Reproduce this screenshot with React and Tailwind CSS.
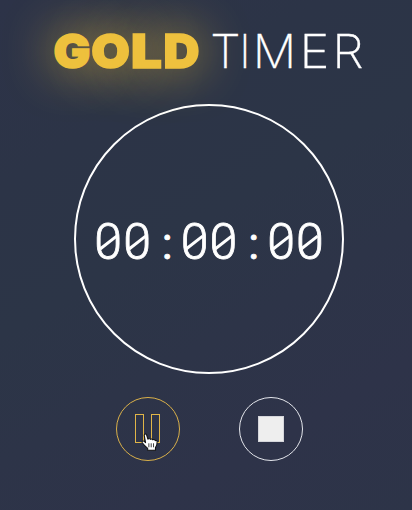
const title = [
  { ch: 'G', w: 'w-[36px]', scale: 'scale-x-[1.04]' },
  { ch: 'O', w: 'w-[41px]', scale: 'scale-x-[1.06]' },
  { ch: 'L', w: 'w-[31px]', scale: 'scale-x-[1.16]' },
  { ch: 'D', w: 'w-[39px]', scale: 'scale-x-[1.06]' },
];

const word = [
  { ch: 'T', w: 'w-[27px]', scale: 'scale-x-[1.03]' },
  { ch: 'I', w: 'w-[12px]', scale: 'scale-x-90' },
  { ch: 'M', w: 'w-[47px]', scale: 'scale-x-[1.03]' },
  { ch: 'E', w: 'w-[33px]', scale: 'scale-x-[1.08]' },
  { ch: 'R', w: 'w-[34px]', scale: 'scale-x-[1.07]' },
];

function Letters({ items, className }) {
  return (
    <span className={`flex ${className}`}>
      {items.map((item) => (
        <span key={item.ch} className={`flex justify-center ${item.w} ${item.scale}`}>
          {item.ch}
        </span>
      ))}
    </span>
  );
}

function Digit({ ch }) {
  return (
    <span className="relative flex w-[28.8px] justify-center">
      {ch}
      {ch === '0' && (
        <span className="absolute top-[30.5px] left-[4px] h-[3.4px] w-[21px] -rotate-[38deg] bg-white" />
      )}
    </span>
  );
}

function Clock({ value }) {
  return (
    <div className="flex pt-[6px] font-['Roboto',sans-serif] text-[50px] leading-[64px] font-light text-white [-webkit-text-stroke:0.8px_#fff]">
      {value.split('').map((ch, i) =>
        ch === ':' ? (
          <span
            key={i}
            className="flex h-16 w-[28.8px] justify-center pt-[2px] pl-[3px] text-[45px] font-normal"
          >
            {ch}
          </span>
        ) : (
          <Digit key={i} ch={ch} />
        )
      )}
    </div>
  );
}

function PauseIcon() {
  return (
    <svg width="25" height="30" viewBox="0 0 25 30" fill="none" stroke="#e0b548">
      <rect x="0.5" y="0.5" width="8" height="28" />
      <rect x="16.5" y="0.5" width="8" height="28" />
    </svg>
  );
}

function HandCursor() {
  return (
    <svg
      className="absolute top-[35px] left-[24px]"
      width="17"
      height="19"
      viewBox="0 0 16 19"
      preserveAspectRatio="none"
      fill="#fff"
      stroke="#111"
      strokeWidth="1"
      strokeLinejoin="round"
    >
      <path d="M3 2.2C3 .6 5 .6 5.3 2l1.2 4.2c.4-.8 1.9-.8 2.3.2.5-.8 1.9-.6 2.3.5.5-.6 2-.5 2.3.8.5-.5 1.8-.2 1.8 1.1 0 2.6-.4 4.2-1.6 5.8v2.6H6.3v-1.8C4.6 13.8 2.8 12 1.2 9.7.5 8.4 1.9 7.4 3 8.4l1.3 1.2z" />
      <path d="M7.4 10.3v4M9.6 10.3v4M11.8 10.3v4" fill="none" strokeWidth="0.8" />
    </svg>
  );
}

export default function App() {
  return (
    <main className="flex h-[510px] w-[412px] flex-col overflow-hidden bg-linear-[150deg,#2d3348_0%,#2c3447_25%,#2c3547_45%,#2d3448_62%,#2e3349_80%,#2d3448_100%] font-['Inter',sans-serif]">
      <h1 className="flex h-[104px] pt-[21px] pl-[54px] text-[47px] leading-[60px]">
        <Letters
          items={title}
          className="font-black text-[#eec13e] [-webkit-text-stroke:1.6px_#eec13e] [text-shadow:0_0_48px_#eec13e]"
        />
        <Letters
          items={word}
          className="ml-[11px] font-extralight text-white [-webkit-text-stroke:0.3px_#fff]"
        />
      </h1>
      <section className="ml-[74px] flex size-[270px] items-center justify-center rounded-full border-2 border-white">
        <Clock value="00:00:00" />
      </section>
      <div className="mt-[23px] flex gap-[59px] pl-[116px]">
        <button
          aria-label="Pause"
          className="relative flex size-16 items-center rounded-full border border-[#d9b04a] pl-[18px]"
        >
          <PauseIcon />
          <HandCursor />
        </button>
        <button
          aria-label="Stop"
          className="flex size-16 items-center justify-center rounded-full border border-[#e4e6ec]"
        >
          <span className="size-[26px] border border-[#d5d6db] bg-[#eeeeee]" />
        </button>
      </div>
    </main>
  );
}
